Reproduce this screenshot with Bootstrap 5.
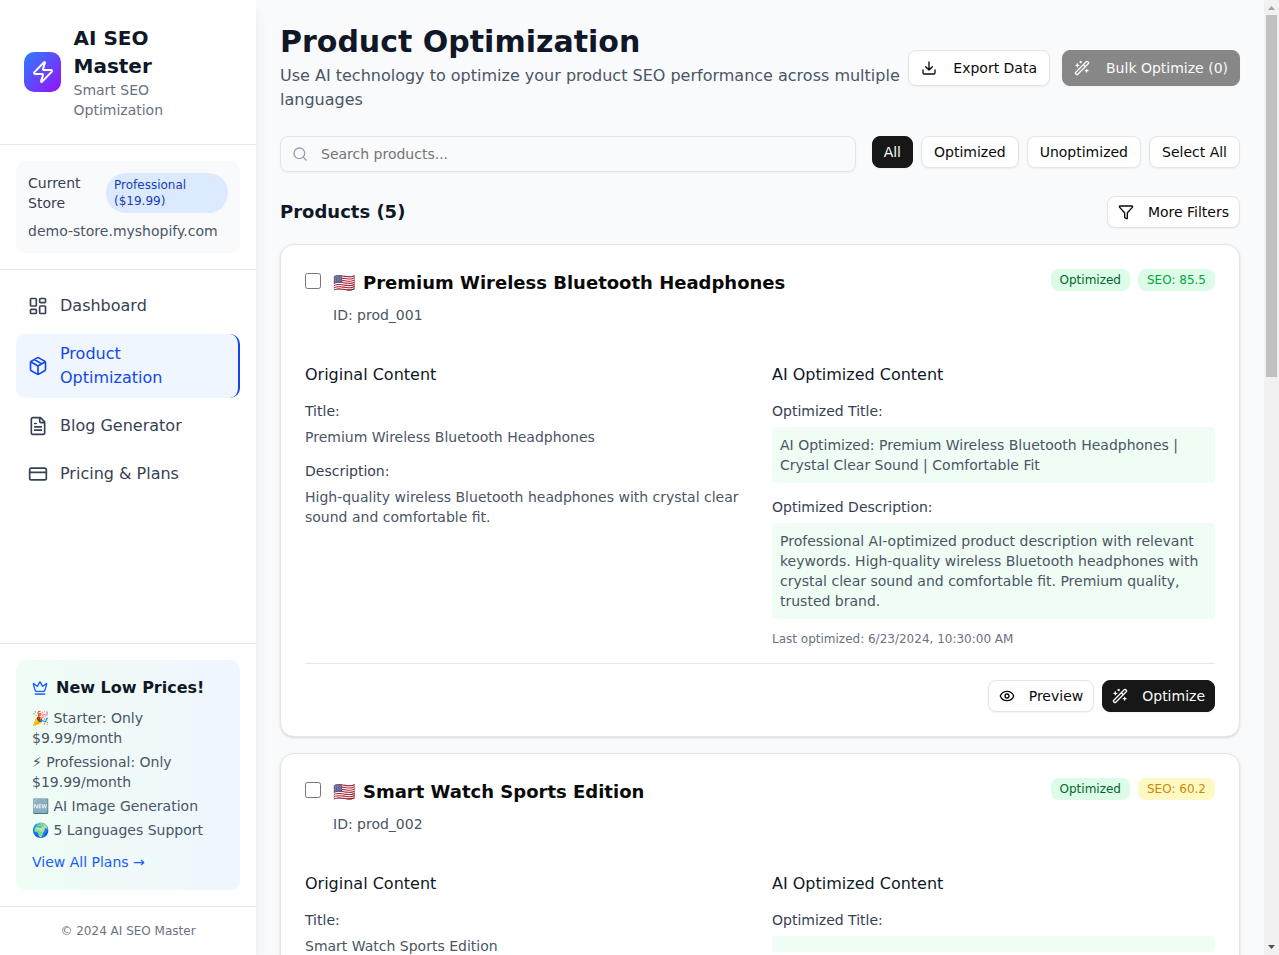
<!DOCTYPE html>
<html lang="en">
<head>
<meta charset="utf-8">
<meta name="viewport" content="width=device-width, initial-scale=1">
<title>AI SEO Master</title>
<link rel="stylesheet" href="https://cdn.jsdelivr.net/npm/bootstrap@5.3.0/dist/css/bootstrap.min.css">
<style>
body{font-family:"DejaVu Sans",sans-serif;font-size:16px;line-height:24px;color:#0a0a0a;background:#f9fafb}
svg{fill:none;stroke:currentColor;stroke-width:2;stroke-linecap:round;stroke-linejoin:round;flex-shrink:0}
h1,h2,h3,h4,p{margin:0}
.i16{width:16px;height:16px}.i20{width:20px;height:20px}.i24{width:24px;height:24px}
.side{width:256px;background:#fff;box-shadow:0 10px 15px -3px rgba(0,0,0,.1),0 4px 6px -4px rgba(0,0,0,.1);z-index:2}
.line-b{border-bottom:1px solid #e5e7eb}.line-t{border-top:1px solid #e5e7eb}
.logo{width:37px;height:40px;border-radius:10px;background:linear-gradient(to bottom right,#2b7fff,#9810fa);color:#fff}
.brand{font-size:20px;line-height:28px;font-weight:700;color:#101828}
.t14{font-size:14px;line-height:20px}.t12{font-size:12px;line-height:16px}
.c5{color:#6a7282}.c6{color:#4a5565}.c7{color:#364153}.c9{color:#101828}
.store{background:#f9fafb;border-radius:10px;padding:12px}
.plan{background:#dbeafe;color:#193cb8;border-radius:20px;padding:4px 8px;width:122px}
.menu{padding:12px 16px 16px}
.menu .nav-link{color:#364153;padding:12px;border-radius:10px;gap:12px}
.menu .nav-link.active{background:#eff6ff;color:#1447e6;border-right:2px solid #1447e6;padding:8px 12px}
.promo{background:linear-gradient(to right,#f0fdf4,#eff6ff);border-radius:10px;padding:16px 16px 18px}
.promo a{color:#155dfc;text-decoration:none;margin-top:12px}
.page{padding:24px;height:955px;overflow:hidden;min-width:0}
h1{font-size:30px;line-height:36px;font-weight:700;color:#101828}
.btn{--bs-btn-font-size:14px;--bs-btn-line-height:20px;--bs-btn-border-radius:8px;--bs-btn-color:#0a0a0a;--bs-btn-bg:#fff;--bs-btn-border-color:#e5e5e5;--bs-btn-padding-x:12px;--bs-btn-padding-y:7px;display:inline-flex;align-items:center;white-space:nowrap;box-shadow:0 1px 2px rgba(0,0,0,.05)}
.btn-sm{--bs-btn-padding-y:5px}
.btn-ic{--bs-btn-padding-x:10px}
.btn svg{margin-right:16px}
.btn-sm svg{margin-right:14px}
.btn-ink{--bs-btn-padding-x:11px;--bs-btn-color:#fafafa;--bs-btn-bg:#171717;--bs-btn-border-color:#171717;--bs-btn-disabled-color:#fafafa;--bs-btn-disabled-bg:#171717;--bs-btn-disabled-border-color:#171717;--bs-btn-disabled-opacity:.5}
.btn-ink.btn-ic{--bs-btn-padding-x:9px}
.search{border:1px solid #e5e5e5;border-radius:8px;height:36px;padding:0 11px;gap:13px;box-shadow:0 1px 2px rgba(0,0,0,.05);color:#99a1af}
.search input{border:0;background:none;outline:0;padding:0;font-size:14px;line-height:20px;color:#0a0a0a}
.search input::placeholder{color:#757575;opacity:1}
h2{font-size:18px;line-height:28px;font-weight:600}
.item{background:#fff;border:1px solid #e5e5e5;border-radius:14px;padding:24px;box-shadow:0 1px 3px rgba(0,0,0,.1),0 1px 2px -1px rgba(0,0,0,.1)}
.item input{width:16px;height:16px;margin:4px 0 0}
.tag{font-size:12px;line-height:16px;padding:3px 9px;border-radius:8px;background:#dcfce7}
.tag-done{color:#016630}.tag-good{color:#00a63e}.tag-mid{background:#fef9c2;color:#d08700}
.cols{margin-top:38px;display:grid;grid-template-columns:443px 443px;gap:24px}
.cols h4{font-size:16px;line-height:24px;font-weight:500;color:#101828;margin-bottom:14px}
.value{margin:6px 0 14px}
.result{background:#f0fdf4;border-radius:4px;padding:8px;margin:6px 0 14px}
.stamp{margin-top:-2px}
.bar{width:15px;height:955px;background:#f1f1f1}
.bar svg{width:15px;height:15px;stroke:none;fill:#505050}
.bar svg.at-end{fill:#a3a3a3}
.thumb{width:11px;height:362px;background:#c1c1c1}
</style>
</head>
<body class="overflow-hidden">
<svg width="0" height="0" class="position-absolute">
<symbol id="wand" viewBox="0 0 24 24"><path d="m21.64 3.64-1.28-1.28a1.21 1.21 0 0 0-1.72 0L2.36 18.64a1.21 1.21 0 0 0 0 1.72l1.28 1.28a1.2 1.2 0 0 0 1.72 0L21.64 5.36a1.2 1.2 0 0 0 0-1.72M14 7l3 3M5 6v4M19 14v4M10 2v2M7 8H3M21 16h-4M11 3H9"/></symbol>
</svg>
<div class="d-flex vh-100">
<aside class="side d-flex flex-column flex-shrink-0">
  <div class="p-4 line-b d-flex align-items-center" style="gap:12.5px">
    <div class="logo d-flex align-items-center justify-content-center flex-shrink-0"><svg class="i24" viewBox="0 0 24 24"><path d="M4 14a1 1 0 0 1-.78-1.63l9.9-10.2a.5.5 0 0 1 .86.46l-1.92 6.02A1 1 0 0 0 13 10h7a1 1 0 0 1 .78 1.63l-9.9 10.2a.5.5 0 0 1-.86-.46l1.92-6.02A1 1 0 0 0 11 14z"/></svg></div>
    <div><div class="brand">AI SEO<br>Master</div><p class="t14 c5">Smart SEO<br>Optimization</p></div>
  </div>
  <div class="p-3 line-b">
    <div class="store">
      <div class="d-flex justify-content-between align-items-center mb-2"><span class="t14 c7">Current<br>Store</span><span class="plan t12">Professional ($19.99)</span></div>
      <p class="t14 c6">demo-store.myshopify.com</p>
    </div>
  </div>
  <nav class="menu nav flex-column flex-nowrap flex-grow-1">
    <a class="nav-link d-flex align-items-center mb-1" href="#"><svg class="i20" viewBox="0 0 24 24"><rect width="7" height="9" x="3" y="3" rx="1"/><rect width="7" height="5" x="14" y="3" rx="1"/><rect width="7" height="9" x="14" y="12" rx="1"/><rect width="7" height="5" x="3" y="16" rx="1"/></svg>Dashboard</a>
    <a class="nav-link active d-flex align-items-center mb-1" href="#"><svg class="i20" viewBox="0 0 24 24"><path d="M11 21.73a2 2 0 0 0 2 0l7-4A2 2 0 0 0 21 16V8a2 2 0 0 0-1-1.73l-7-4a2 2 0 0 0-2 0l-7 4A2 2 0 0 0 3 8v8a2 2 0 0 0 1 1.73zM12 22V12M3.29 7 12 12l8.71-5M7.5 4.27l9 5.15"/></svg><span>Product<br>Optimization</span></a>
    <a class="nav-link d-flex align-items-center" href="#"><svg class="i20" viewBox="0 0 24 24"><path d="M15 2H6a2 2 0 0 0-2 2v16a2 2 0 0 0 2 2h12a2 2 0 0 0 2-2V7ZM14 2v4a2 2 0 0 0 2 2h4M10 9H8M16 13H8M16 17H8"/></svg>Blog Generator</a>
    <a class="nav-link d-flex align-items-center" href="#"><svg class="i20" viewBox="0 0 24 24"><rect width="20" height="14" x="2" y="5" rx="2"/><path d="M2 10h20"/></svg>Pricing &amp; Plans</a>
  </nav>
  <div class="p-3 line-t">
    <div class="promo">
      <div class="d-flex align-items-center gap-2 mb-2 c9 fw-semibold"><svg class="i16" style="color:#155dfc" viewBox="0 0 24 24"><path d="M11.562 3.266a.5.5 0 0 1 .876 0L15.39 8.87a1 1 0 0 0 1.516.294L21.183 5.5a.5.5 0 0 1 .798.519l-2.834 10.246a1 1 0 0 1-.956.734H5.81a1 1 0 0 1-.957-.734L2.02 6.02a.5.5 0 0 1 .798-.519l4.276 3.664a1 1 0 0 0 1.516-.294zM5 21h14"/></svg>New Low Prices!</div>
      <div class="t14 c6 d-flex flex-column gap-1">
        <div>🎉 Starter: Only $9.99/month</div><div>⚡ Professional: Only $19.99/month</div><div>🆕 AI Image Generation</div><div>🌍 5 Languages Support</div>
      </div>
      <a href="#" class="t14 d-block">View All Plans →</a>
    </div>
  </div>
  <div class="p-3 line-t t12 c5 text-center">© 2024 AI SEO Master</div>
</aside>
<main class="page flex-grow-1">
  <div class="d-flex align-items-center justify-content-between">
    <div><h1>Product Optimization</h1><p class="c6 mt-1">Use AI technology to optimize your product SEO performance across multiple languages</p></div>
    <div class="d-flex flex-shrink-0" style="gap:12px">
      <button class="btn"><svg class="i16" viewBox="0 0 24 24"><path d="M12 15V3M21 15v4a2 2 0 0 1-2 2H5a2 2 0 0 1-2-2v-4M7 10l5 5 5-5"/></svg>Export Data</button>
      <button class="btn btn-ink" disabled><svg class="i16"><use href="#wand"/></svg>Bulk Optimize (0)</button>
    </div>
  </div>
  <div class="d-flex gap-3 mt-4">
    <label class="search d-flex align-items-center flex-grow-1"><svg class="i16" viewBox="0 0 24 24"><path d="m21 21-4.34-4.34"/><circle cx="11" cy="11" r="8"/></svg><input class="flex-grow-1" placeholder="Search products..."></label>
    <div class="d-flex gap-2 align-items-start"><button class="btn btn-sm btn-ink">All</button><button class="btn btn-sm">Optimized</button><button class="btn btn-sm">Unoptimized</button><button class="btn btn-sm">Select All</button></div>
  </div>
  <div class="d-flex justify-content-between align-items-center mt-4 mb-3">
    <h2 class="c9">Products (5)</h2>
    <button class="btn btn-sm btn-ic"><svg class="i16" viewBox="0 0 24 24"><path d="M10 20a1 1 0 0 0 .553.895l2 1A1 1 0 0 0 14 21v-7a2 2 0 0 1 .517-1.341L21.74 4.67A1 1 0 0 0 21 3H3a1 1 0 0 0-.742 1.67l7.225 7.989A2 2 0 0 1 10 14z"/></svg>More Filters</button>
  </div>
  <article class="item mb-3">
    <div class="d-flex justify-content-between align-items-start">
      <div class="d-flex" style="gap:12px"><input type="checkbox"><div><h2 class="d-flex gap-2"><span>🇺🇸</span>Premium Wireless Bluetooth Headphones</h2><p class="t14 c6 mt-2">ID: prod_001</p></div></div>
      <div class="d-flex gap-2"><span class="tag tag-done">Optimized</span><span class="tag tag-good">SEO: 85.5</span></div>
    </div>
    <div class="cols t14">
      <section><h4>Original Content</h4><div class="c7">Title:</div><p class="c6 value">Premium Wireless Bluetooth Headphones</p><div class="c7">Description:</div><p class="c6 value">High-quality wireless Bluetooth headphones with crystal clear sound and comfortable fit.</p></section>
      <section><h4>AI Optimized Content</h4><div class="c7">Optimized Title:</div><p class="c6 result">AI Optimized: Premium Wireless Bluetooth Headphones | Crystal Clear Sound | Comfortable Fit</p><div class="c7">Optimized Description:</div><p class="c6 result">Professional AI-optimized product description with relevant keywords. High-quality wireless Bluetooth headphones with crystal clear sound and comfortable fit. Premium quality, trusted brand.</p><p class="t12 c5 stamp">Last optimized: 6/23/2024, 10:30:00 AM</p></section>
    </div>
    <div class="line-t mt-3 pt-3 d-flex justify-content-end gap-2">
      <button class="btn btn-sm btn-ic"><svg class="i16" viewBox="0 0 24 24"><path d="M2.062 12.348a1 1 0 0 1 0-.696 10.75 10.75 0 0 1 19.876 0 1 1 0 0 1 0 .696 10.75 10.75 0 0 1-19.876 0"/><circle cx="12" cy="12" r="3"/></svg>Preview</button>
      <button class="btn btn-sm btn-ic btn-ink"><svg class="i16"><use href="#wand"/></svg>Optimize</button>
    </div>
  </article>
  <article class="item">
    <div class="d-flex justify-content-between align-items-start">
      <div class="d-flex" style="gap:12px"><input type="checkbox"><div><h2 class="d-flex gap-2"><span>🇺🇸</span>Smart Watch Sports Edition</h2><p class="t14 c6 mt-2">ID: prod_002</p></div></div>
      <div class="d-flex gap-2"><span class="tag tag-done">Optimized</span><span class="tag tag-mid">SEO: 60.2</span></div>
    </div>
    <div class="cols t14">
      <section><h4>Original Content</h4><div class="c7">Title:</div><p class="c6 value">Smart Watch Sports Edition</p></section>
      <section><h4>AI Optimized Content</h4><div class="c7">Optimized Title:</div><p class="result"></p></section>
    </div>
  </article>
</main>
<div class="bar d-flex flex-column align-items-center flex-shrink-0">
  <svg class="at-end" viewBox="0 0 15 15"><path d="M4 10h7L7.500 6z"/></svg>
  <div class="thumb"></div>
  <svg class="mt-auto" viewBox="0 0 15 15"><path d="M4 5h7L7.500 9z"/></svg>
</div>
</div>
<script src="https://cdn.jsdelivr.net/npm/bootstrap@5.3.0/dist/js/bootstrap.bundle.min.js"></script>
</body>
</html>
